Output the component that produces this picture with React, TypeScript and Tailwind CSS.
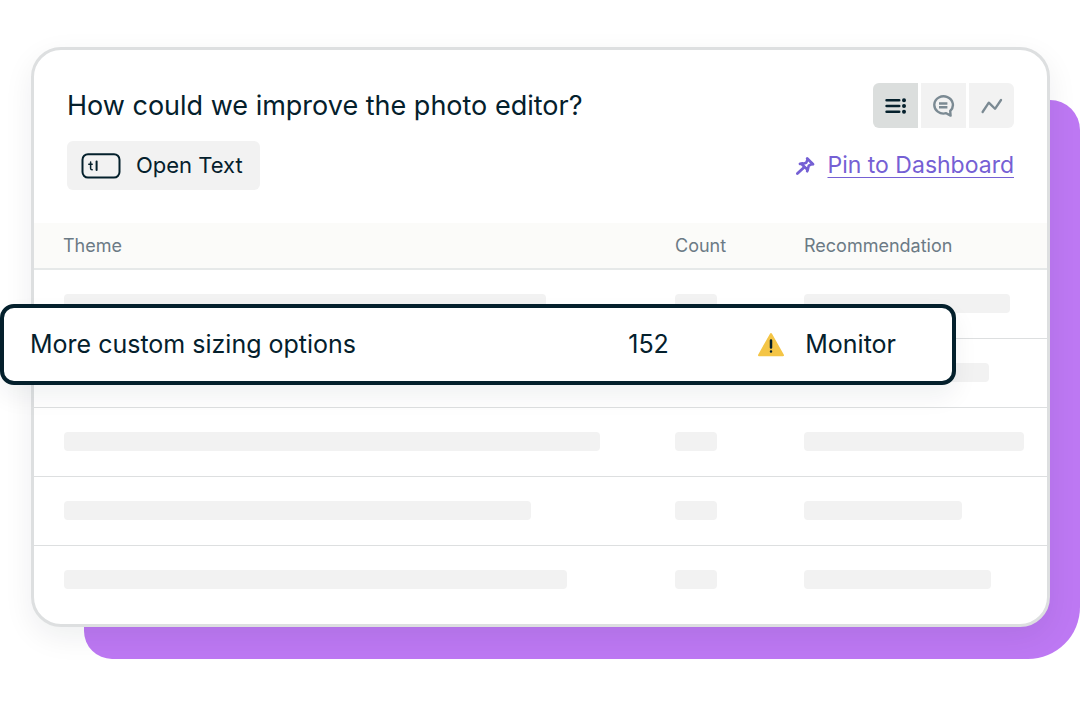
import { clsx } from "clsx";

type Row = { theme: number; recommendation: number };

// Placeholder bar widths, in pixels
const rows: Row[] = [
  { theme: 482, recommendation: 206 },
  { theme: 440, recommendation: 185 },
  { theme: 536, recommendation: 220 },
  { theme: 467, recommendation: 158 },
  { theme: 503, recommendation: 187 },
];

const ListIcon = () => (
  <svg width="24" height="18" viewBox="0 0 24 18" fill="none" stroke="currentColor" strokeWidth="2.6" strokeLinecap="round" aria-hidden="true">
    <path d="M2.6 3.2h12.6M2.6 9h12.6M2.6 14.8h12.6" />
    <path d="M20 3.2h.01M20 9h.01M20 14.8h.01" strokeWidth="4" />
  </svg>
);

const CommentIcon = () => (
  <svg width="24" height="22" viewBox="0 0 24 22" fill="none" stroke="currentColor" strokeWidth="2.4" strokeLinejoin="round" aria-hidden="true">
    <path d="M18.2 16A9.3 8.6 0 1 0 14.2 18.2L18.6 20.6Z" />
    <path d="M7 8.6h8.4M7 12.2h8.4" strokeWidth="2.5" />
  </svg>
);

const TrendIcon = () => (
  <svg width="22" height="18" viewBox="0 0 22 18" fill="none" stroke="currentColor" strokeWidth="2.3" strokeLinecap="round" strokeLinejoin="round" aria-hidden="true">
    <path d="M1.6 15L7.8 5.6l6.2 6.2L20 3" />
  </svg>
);

const PinIcon = () => (
  <svg width="20" height="20" viewBox="0 0 20 20" fill="none" stroke="currentColor" strokeLinecap="round" strokeLinejoin="round" aria-hidden="true">
    <path d="M12.2 2.4L18 8.2" strokeWidth="2.8" />
    <path d="M12.6 3.4L11.2 6.8L6.8 8.2L12.6 13.8L13.8 9.6L17 8" strokeWidth="2.6" />
    <path d="M5 7.8L7.4 7.4M12.2 15.2L12.8 13.2M9.2 11.2L2.4 17.6" strokeWidth="2.8" />
  </svg>
);

const OpenTextIcon = () => (
  <svg width="40" height="26" viewBox="0 0 40 26" fill="none" stroke="currentColor" strokeWidth="2" strokeLinecap="round" aria-hidden="true">
    <rect x="1.5" y="1.2" width="37" height="23.4" rx="5.5" />
    <path d="M9.6 9v6.2q0 1.6 1.6 1.6M7.8 11.2h3.4" strokeWidth="1.5" />
    <path d="M15.6 8.4v8.6" />
  </svg>
);

const WarningIcon = () => (
  <svg width="28" height="25" viewBox="0 0 28 25" aria-hidden="true">
    <path d="M14 2L26 23.2H2Z" fill="#f4c546" stroke="#f4c546" strokeWidth="2" strokeLinejoin="round" />
    <path d="M14 8.4v7M14 19.6v.01" stroke="#04202c" strokeWidth="2.5" strokeLinecap="round" />
  </svg>
);

const views = [
  { name: "List", icon: <ListIcon />, active: true },
  { name: "Comments", icon: <CommentIcon />, active: false },
  { name: "Trend", icon: <TrendIcon />, active: false },
];

const Bar = ({ width }: { width: number }) => (
  <div className="h-[19px] max-w-full rounded bg-[#f2f2f2]" style={{ width }} />
);

const Header = () => (
  <header className="flex flex-col gap-[13px] px-[33px] py-[33px]">
    <div className="flex items-center justify-between">
      <h1 className="text-[27px] leading-8">How could we improve the photo editor?</h1>
      <div className="flex gap-[3px] overflow-hidden rounded-md">
        {views.map(({ name, icon, active }) => (
          <button
            key={name}
            type="button"
            aria-label={name}
            aria-pressed={active}
            className={clsx(
              "flex h-[45px] w-[45px] items-center justify-center",
              active ? "bg-[#dbdedd]" : "bg-[#f2f2f2] text-[#7b8a93]"
            )}
          >
            {icon}
          </button>
        ))}
      </div>
    </div>
    <div className="flex items-center justify-between">
      <div className="flex h-[49px] items-center gap-[15px] rounded-md bg-[#f2f2f2] pr-[17px] pl-[14px] text-[22px]">
        <OpenTextIcon />
        Open Text
      </div>
      <a href="#dashboard" className="flex items-center gap-3 text-[23px] text-[#7560d4]">
        <PinIcon />
        <span className="underline decoration-1 underline-offset-4">Pin to Dashboard</span>
      </a>
    </div>
  </header>
);

const ThemeTable = () => (
  <table className="mb-[10px] w-full table-fixed border-collapse">
    <colgroup>
      <col />
      <col className="w-[129px]" />
      <col className="w-[243px]" />
    </colgroup>
    <thead>
      <tr className="h-[46px] border-b-2 border-[#e6e9e9] bg-[#fbfbf9] text-left text-[18px] text-[#6b7a85]">
        <th className="pl-[29px] font-normal">Theme</th>
        <th className="font-normal">Count</th>
        <th className="font-normal">Recommendation</th>
      </tr>
    </thead>
    <tbody>
      {rows.map((row, i) => (
        <tr key={i} className="h-[69px] border-b border-[#dddfe0] last:border-b-0">
          <td className="pl-[30px]">
            <Bar width={row.theme} />
          </td>
          <td>
            <Bar width={42} />
          </td>
          <td>
            <Bar width={row.recommendation} />
          </td>
        </tr>
      ))}
    </tbody>
  </table>
);

// Enlarged row that floats over the table
const Highlight = () => (
  <div className="absolute top-[257px] right-[94px] -left-[31px] flex h-[81px] items-center rounded-[14px] border-4 border-[#04202c] bg-white pr-14 pl-[26px] text-[25px] shadow-[0_12px_24px_rgba(4,32,44,0.06)]">
    <span className="flex-1">More custom sizing options</span>
    <span className="w-[129px]">152</span>
    <span className="flex items-center gap-5">
      <WarningIcon />
      Monitor
    </span>
  </div>
);

export default function App() {
  return (
    <main className="min-h-screen overflow-hidden bg-white pt-[47px] pr-[30px] pb-[79px] pl-[31px] font-['Inter',sans-serif] text-[#04202c]">
      <div className="relative">
        <div className="absolute top-[53px] -right-[30px] -bottom-8 left-[53px] rounded-tr-[30px] rounded-br-[52px] rounded-bl-[28px] bg-[#bd78f3]" />
        <section className="relative overflow-hidden rounded-[30px] border-3 border-[#dddfe0] bg-white shadow-[0_10px_30px_rgba(4,32,44,0.07)]">
          <Header />
          <ThemeTable />
        </section>
        <Highlight />
      </div>
    </main>
  );
}
